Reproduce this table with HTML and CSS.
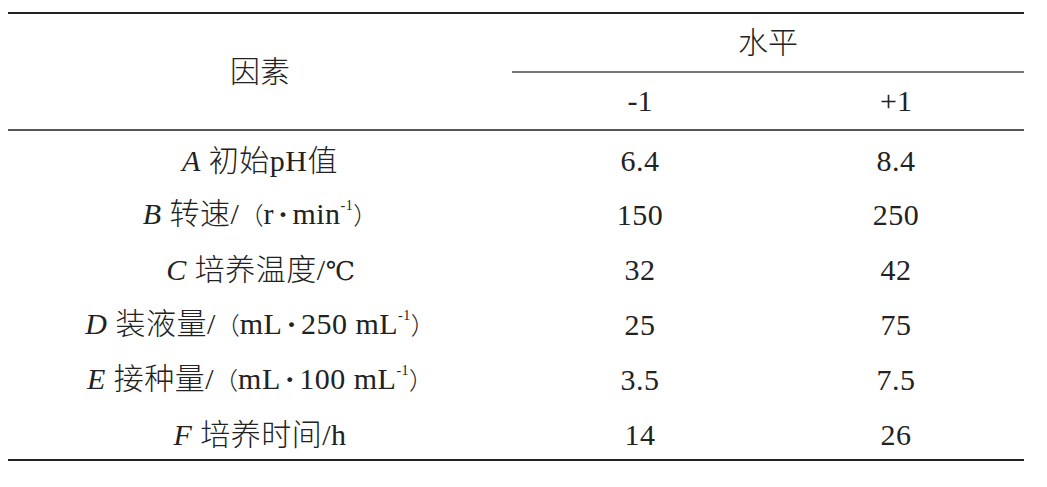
FILE: index.html
```html
<!DOCTYPE html>
<html lang="zh-CN">
<head>
<meta charset="UTF-8">
<title>因素水平表</title>
<link rel="stylesheet" href="styles.css">
</head>
<body>

<table class="levels">
    <thead>
        <tr>
            <th class="factor-head" rowspan="2">因素</th>
            <th class="level-head" colspan="2">水平</th>
        </tr>
        <tr class="code-row">
            <th>-1</th>
            <th>+1</th>
        </tr>
    </thead>
    <tbody>
        <tr>
            <td><i>A</i> 初始pH值</td>
            <td>6.4</td>
            <td>8.4</td>
        </tr>
        <tr>
            <td><i>B</i> 转速/<span class="paren">（</span>r<span class="dot">·</span>min<sup>-1</sup><span class="paren">）</span></td>
            <td>150</td>
            <td>250</td>
        </tr>
        <tr>
            <td><i>C</i> 培养温度/<span class="unit">℃</span></td>
            <td>32</td>
            <td>42</td>
        </tr>
        <tr>
            <td><i>D</i> 装液量/<span class="paren">（</span>mL<span class="dot">·</span>250 mL<sup>-1</sup><span class="paren">）</span></td>
            <td>25</td>
            <td>75</td>
        </tr>
        <tr>
            <td><i>E</i> 接种量/<span class="paren">（</span>mL<span class="dot">·</span>100 mL<sup>-1</sup><span class="paren">）</span></td>
            <td>3.5</td>
            <td>7.5</td>
        </tr>
        <tr>
            <td><i>F</i> 培养时间/h</td>
            <td>14</td>
            <td>26</td>
        </tr>
    </tbody>
</table>

</body>
</html>
```

FILE: styles.css
```css
body {
    margin: 0;
    padding: 12px 23px 0 8px;
    background-color: #ffffff;
    color: #222222;
    font-family: "Liberation Serif", "Noto Sans CJK SC", serif;
    font-size: 30px;
    font-weight: 300;
}

.levels {
    width: 1016px;
    border-collapse: collapse;
    border-top: 2px solid #222222;
    border-bottom: 2px solid #222222;
}

.levels th,
.levels td {
    padding: 0;
    text-align: center;
    font-weight: 300;
    line-height: 30px;
}

.levels thead {
    border-bottom: 2px solid #555555;
}

.factor-head {
    width: 504px;
}

.level-head {
    height: 57px;
    border-bottom: 2px solid #777777;
}

.code-row th {
    width: 256px;
    height: 56px;
}

.levels td {
    height: 55px;
    padding-top: 5px;
    box-sizing: border-box;
    letter-spacing: 0.5px;
}

.levels i {
    font-style: italic;
}

.paren {
    font-size: 24px;
    letter-spacing: 0;
}

.dot {
    font-weight: bold;
    margin: 0 4px;
}

.unit {
    font-family: "DejaVu Serif", "Noto Sans CJK SC", serif;
    font-size: 26px;
    letter-spacing: -1px;
}

.levels sup {
    font-size: 14px;
    line-height: 0;
    vertical-align: 14px;
}
```
